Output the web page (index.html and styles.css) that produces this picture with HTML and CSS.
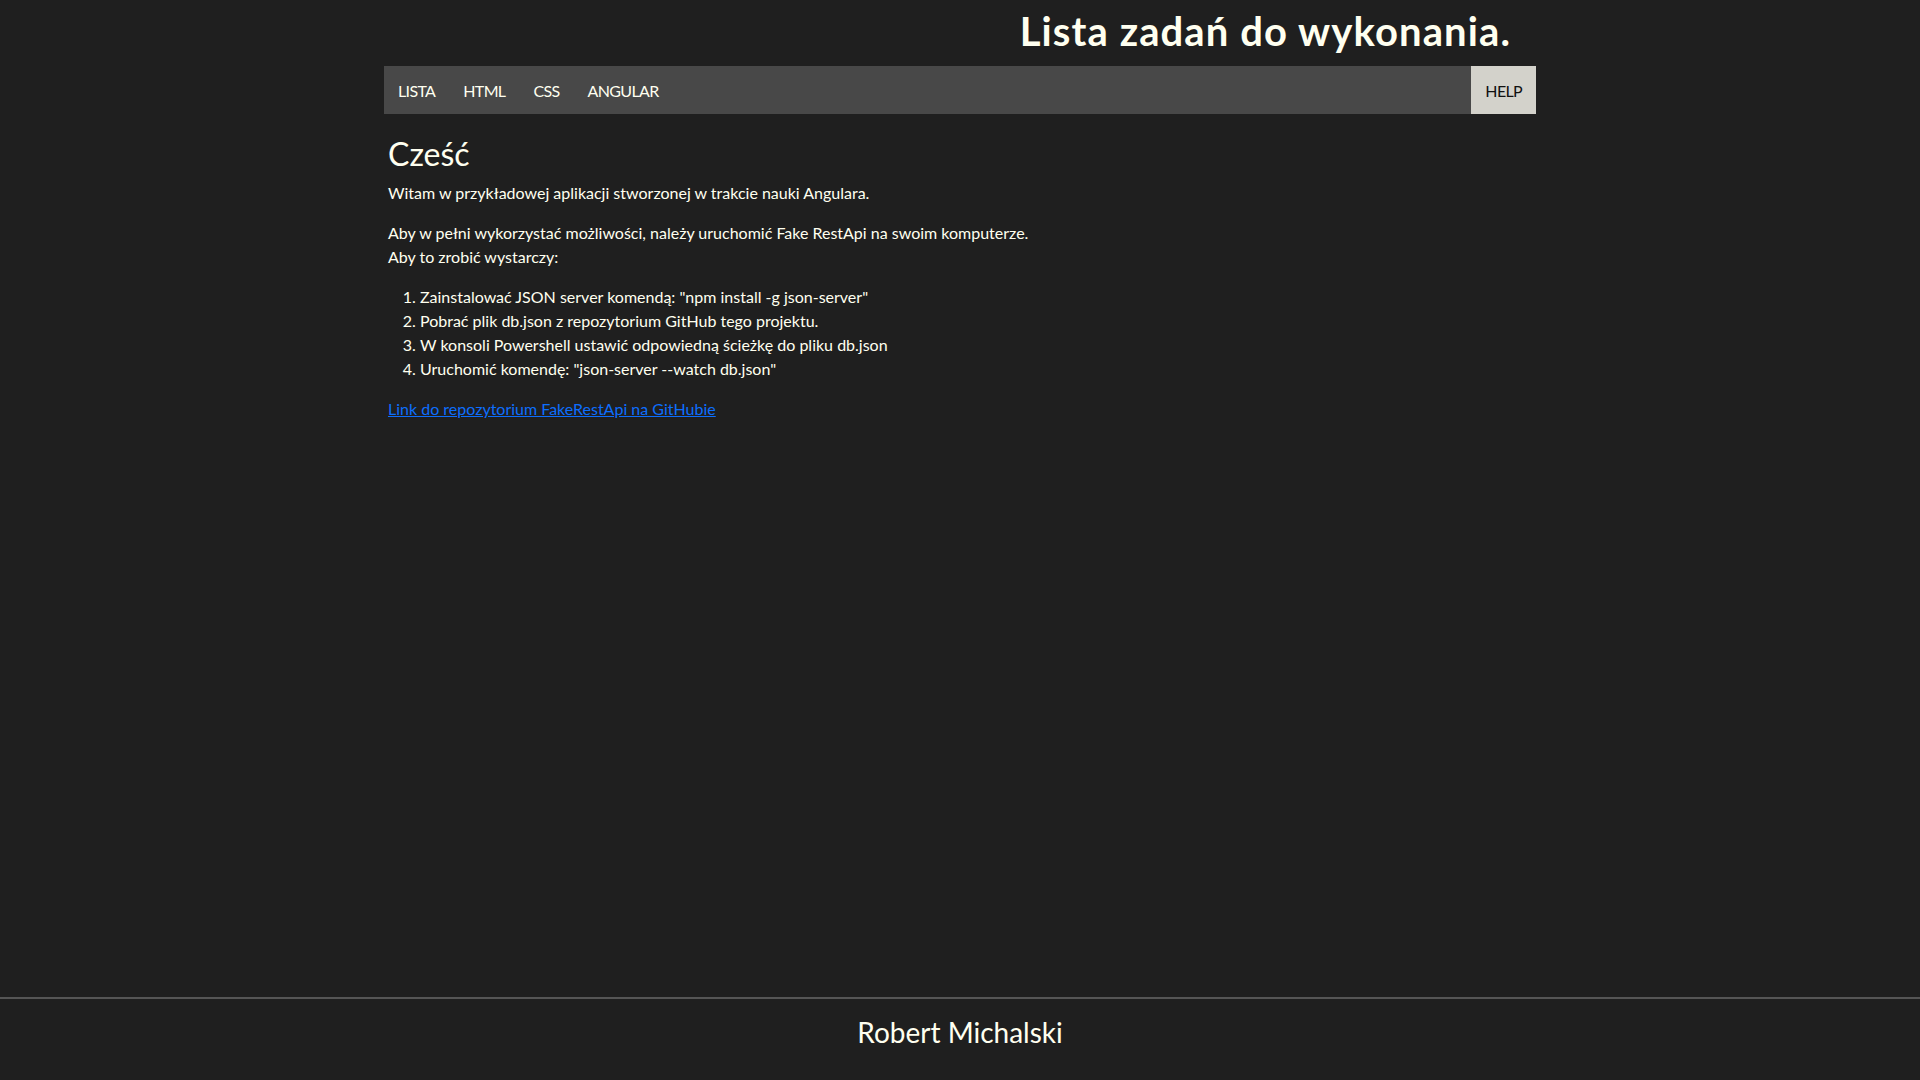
FILE: index.html
```html
<!DOCTYPE html>
<html lang="pl">
<head>
<meta charset="utf-8">
<title>Lista zadań do wykonania.</title>
<link rel="stylesheet" href="styles.css">
</head>
<body>
<div class="page">
  <header class="header">
    <h1 class="title">Lista zadań do wykonania.</h1>
    <nav class="nav">
      <a class="nav-item" href="#">LISTA</a>
      <a class="nav-item" href="#">HTML</a>
      <a class="nav-item" href="#">CSS</a>
      <a class="nav-item" href="#">ANGULAR</a>
      <a class="nav-item nav-help" href="#">HELP</a>
    </nav>
  </header>
  <main class="content">
    <h2 class="heading">Cześć</h2>
    <p class="text">Witam w przykładowej aplikacji stworzonej w trakcie nauki Angulara.</p>
    <p class="text">Aby w pełni wykorzystać możliwości, należy uruchomić Fake RestApi na swoim komputerze.<br>Aby to zrobić wystarczy:</p>
    <ol class="steps">
      <li>Zainstalować JSON server komendą: "npm install -g json-server"</li>
      <li>Pobrać plik db.json z repozytorium GitHub tego projektu.</li>
      <li>W konsoli Powershell ustawić odpowiedną ścieżkę do pliku db.json</li>
      <li>Uruchomić komendę: "json-server --watch db.json"</li>
    </ol>
    <p class="text"><a class="link" href="#">Link do repozytorium FakeRestApi na GitHubie</a></p>
  </main>
</div>
<footer class="footer">Robert Michalski</footer>
</body>
</html>
```

FILE: styles.css
```css
html, body {
  margin: 0;
  padding: 0;
}
body {
  background: #1f1f1f;
  color: #fffff0;
  font-family: Lato, "Open Sans", sans-serif;
  font-size: 16px;
  line-height: 24px;
  min-height: 100vh;
  display: flex;
  flex-direction: column;
}
.page {
  flex: 1;
  width: 60%;
  margin: 0 auto;
}
.header {
  display: flex;
  flex-direction: column;
}
.title {
  margin: 0;
  height: 66px;
  padding: 0 25px 0 0;
  box-sizing: border-box;
  text-align: right;
  font-size: 40px;
  font-weight: 700;
  letter-spacing: 1.1px;
  line-height: 62px;
  color: #fffff0;
}
.nav {
  display: flex;
  height: 48px;
  background: #484848;
}
.nav-item {
  display: block;
  padding: 1px 14px 0;
  line-height: 47px;
  color: #fffff0;
  text-decoration: none;
  font-size: 16px;
  letter-spacing: -0.65px;
}
.nav-help {
  margin-left: auto;
  background: #d3d2cb;
  color: #111;
}
.content {
  padding: 21px 0 0 4px;
}
.heading {
  margin: 0 0 8px;
  font-size: 32px;
  font-weight: 400;
  line-height: 38px;
}
.text {
  margin: 0 0 16px;
}
.steps {
  margin: 0 0 16px;
  padding-left: 32px;
}
.link {
  color: #0d6efd;
  text-decoration: underline;
}
.footer {
  border-top: 2px solid #555;
  height: 83px;
  box-sizing: border-box;
  display: flex;
  align-items: center;
  justify-content: center;
  font-size: 28px;
  line-height: 36px;
  padding-bottom: 16px;
}
```
